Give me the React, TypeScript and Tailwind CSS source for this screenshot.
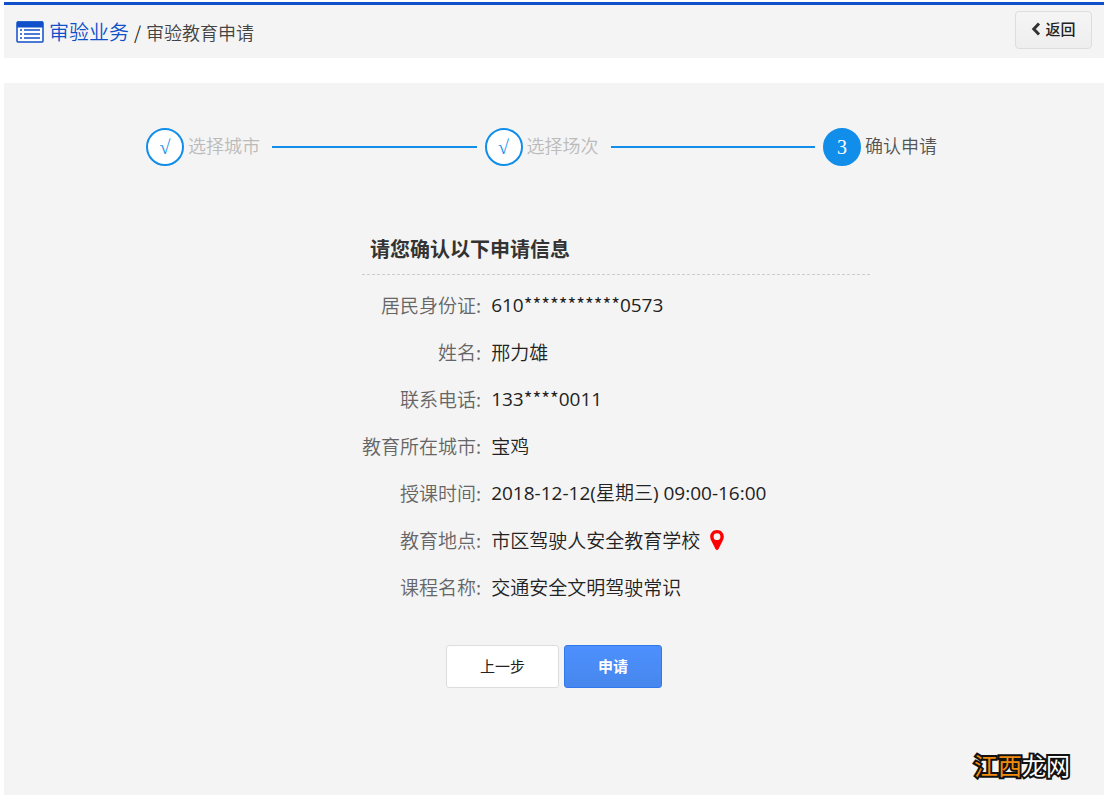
import { Fragment } from "react";

interface Step {
  mark: string;
  label: string;
  active?: boolean;
}

interface Field {
  label: string;
  value: string;
  pin?: boolean;
}

const steps: Step[] = [
  { mark: "√", label: "选择城市" },
  { mark: "√", label: "选择场次" },
  { mark: "3", label: "确认申请", active: true },
];

const fields: Field[] = [
  { label: "居民身份证", value: "610***********0573" },
  { label: "姓名", value: "邢力雄" },
  { label: "联系电话", value: "133****0011" },
  { label: "教育所在城市", value: "宝鸡" },
  { label: "授课时间", value: "2018-12-12(星期三) 09:00-16:00" },
  { label: "教育地点", value: "市区驾驶人安全教育学校", pin: true },
  { label: "课程名称", value: "交通安全文明驾驶常识" },
];

function ListIcon() {
  return (
    <svg width="28" height="22" viewBox="0 0 28 22" aria-hidden="true">
      <rect x="1" y="1" width="26" height="20" rx="1" fill="#fff" stroke="#0f4fc9" strokeWidth="1.500" />
      <path d="M1 .5h26v6H1z" fill="#0f4fc9" />
      <path d="M4 9h2M8 9h16M4 13h2M8 13h16M4 17h2M8 17h16" stroke="#0f4fc9" strokeWidth="1.600" />
    </svg>
  );
}

function PinIcon() {
  return (
    <svg width="14" height="20" viewBox="0 0 14 20" aria-hidden="true">
      <path
        fill="#f00"
        fillRule="evenodd"
        d="M7 0C3 0 .2 2.9.2 6.600c0 1.600.4 2.500 1 3.900l4.300 8.500c.6 1.200 2.400 1.200 3 0l4.300-8.500c.6-1.400 1-2.300 1-3.900C13.800 2.900 11 0 7 0Zm0 3.300a3.400 3.400 0 1 1 0 6.800 3.400 3.400 0 0 1 0-6.800Z"
      />
    </svg>
  );
}

function StepBar() {
  return (
    <ol className="mx-auto flex max-w-[816px]">
      {steps.map((s) => (
        <li key={s.label} className={`flex items-center ${s.active ? "w-[139px]" : "flex-1"}`}>
          <span
            className={`flex h-[38px] w-[38px] shrink-0 items-center justify-center rounded-full border-2 border-[#118eea] font-['Liberation_Serif',serif] text-xl ${
              s.active ? "bg-[#118eea] text-white" : "bg-white text-[#118eea]"
            }`}
          >
            {s.mark}
          </span>
          <span className={`ml-1 shrink-0 pb-1 text-lg ${s.active ? "text-[#555]" : "text-[#bbb]"}`}>{s.label}</span>
          {!s.active && <span className="mr-2 ml-3 h-0.5 flex-1 bg-[#118eea]" />}
        </li>
      ))}
    </ol>
  );
}

// Digits and punctuation get a wider Latin face, the masked part keeps the narrow CJK asterisk
function FieldValue({ value }: { value: string }) {
  return (
    <span>
      {value.split(/([\d:()\- ]+)/).map((part, i) =>
        i % 2 === 1 ? (
          <span key={i} className="font-['Open_Sans',sans-serif] font-normal">{part}</span>
        ) : (
          part
        )
      )}
    </span>
  );
}

export default function App() {
  return (
    <div className="pt-0.5 pr-[3px] pb-0.5 pl-1 font-['Noto_Sans_CJK_SC',sans-serif] font-[350] text-[#222]">
      <header className="flex items-center border-t-3 border-[#0f4fc9] bg-[#f4f4f4] py-1.5 pr-3 pl-3">
        <ListIcon />
        <nav className="ml-[5px] flex flex-1 items-center">
          <a href="#business" className="text-xl text-[#0f4fc9]">审验业务</a>
          <span className="mx-[5px] text-lg">/</span>
          <span className="text-lg text-[#444]">审验教育申请</span>
        </nav>
        <button className="mb-[3px] flex h-[38px] w-[77px] items-center justify-center gap-1 rounded border border-[#ddd] bg-linear-to-b from-[#f5f5f5] to-[#eee] pb-0.5 text-[15px] font-medium">
          <svg width="10" height="14" viewBox="0 0 10 14" aria-hidden="true">
            <path d="M8 1.500 2.800 7 8 12.500" fill="none" stroke="#333" strokeWidth="3" />
          </svg>
          返回
        </button>
      </header>

      <main className="relative mt-[25px] bg-[#f4f4f4] pt-[45px] pb-[107px]">
        <StepBar />

        <div className="mt-[58px] flex justify-center pl-[124px]">
          <section className="w-[508px]">
            <h2 className="border-b border-dashed border-[#ccc] px-2 py-[5px] text-xl leading-10 font-bold text-[#333]">
              请您确认以下申请信息
            </h2>
            <dl className="mt-1.5 grid auto-rows-[47px] grid-cols-[auto_1fr] gap-x-2.5 text-[19px] leading-[47px]">
              {fields.map((f) => (
                <Fragment key={f.label}>
                  <dt className="text-right text-[#666]">{f.label}:</dt>
                  <dd className="flex items-center gap-2.5">
                    <FieldValue value={f.value} />
                    {f.pin && <PinIcon />}
                  </dd>
                </Fragment>
              ))}
            </dl>
          </section>
        </div>

        <div className="mt-[35px] flex justify-center gap-[5px] text-[15px]">
          <button className="h-[43px] w-[113px] rounded-[3px] border border-[#ddd] bg-white font-normal">上一步</button>
          <button className="h-[43px] w-[98px] rounded-[3px] border border-[#3079ed] bg-linear-to-b from-[#4d90fe] to-[#4787ed] font-bold text-white">
            申请
          </button>
        </div>

        <div className="absolute right-[34px] bottom-3.5 text-2xl font-normal text-white [-webkit-text-stroke:4px_#111] [paint-order:stroke_fill]">
          <span className="text-[#f08a10]">江西</span>龙网
        </div>
      </main>
    </div>
  );
}
